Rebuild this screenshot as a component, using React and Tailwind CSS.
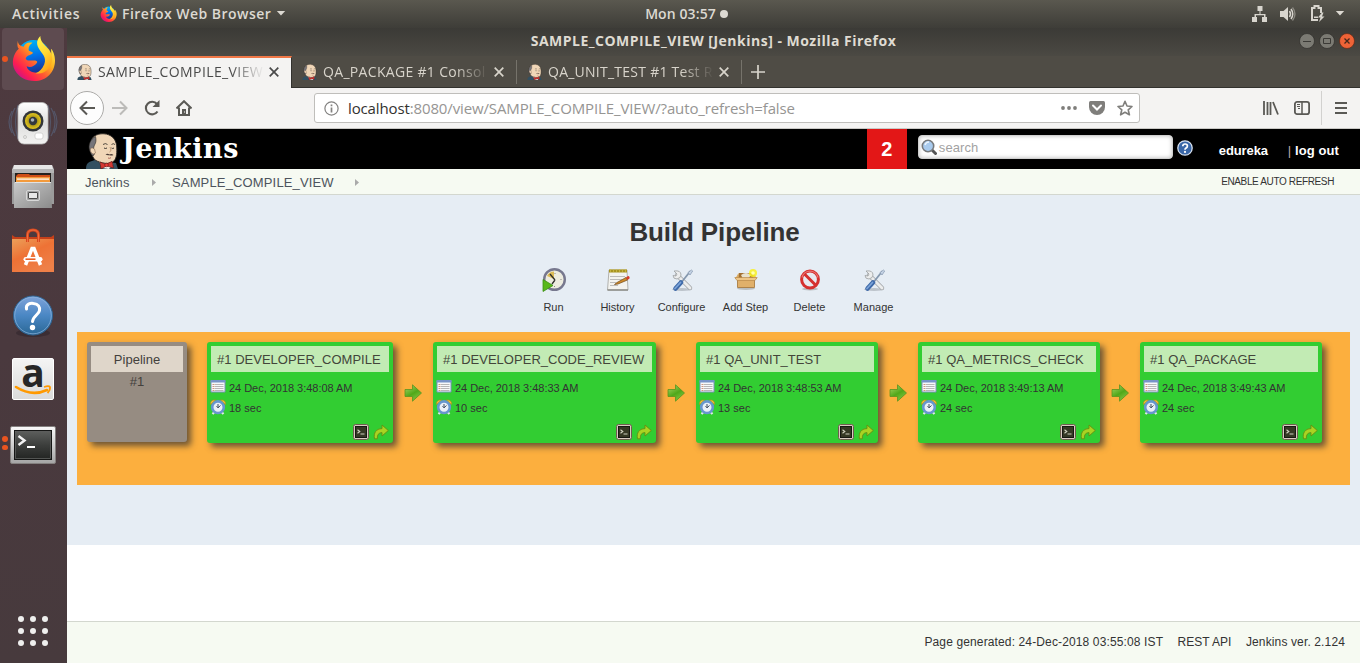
import React from "react";

const builds = [
  { name: "#1 DEVELOPER_COMPILE", time: "24 Dec, 2018 3:48:08 AM", took: "18 sec", width: "w-[186px]" },
  { name: "#1 DEVELOPER_CODE_REVIEW", time: "24 Dec, 2018 3:48:33 AM", took: "10 sec", width: "w-[223px]" },
  { name: "#1 QA_UNIT_TEST", time: "24 Dec, 2018 3:48:53 AM", took: "13 sec", width: "w-[182px]" },
  { name: "#1 QA_METRICS_CHECK", time: "24 Dec, 2018 3:49:13 AM", took: "24 sec", width: "w-[182px]" },
  { name: "#1 QA_PACKAGE", time: "24 Dec, 2018 3:49:43 AM", took: "24 sec", width: "w-[182px]" },
];

function FirefoxLogo({ className }) {
  return (
    <svg viewBox="0 0 44 46" className={className}>
      <defs>
        <linearGradient id="ffBody" x1="0.9" y1="0.1" x2="0.15" y2="0.85">
          <stop offset="0" stopColor="#fff24a" />
          <stop offset="0.35" stopColor="#ffb01e" />
          <stop offset="0.62" stopColor="#ff5634" />
          <stop offset="0.85" stopColor="#ff1f4f" />
          <stop offset="1" stopColor="#d8157c" />
        </linearGradient>
        <linearGradient id="ffGlobe" x1="0.4" y1="0" x2="0.6" y2="1">
          <stop offset="0" stopColor="#00b4f5" />
          <stop offset="0.5" stopColor="#0070e8" />
          <stop offset="1" stopColor="#1c2f8f" />
        </linearGradient>
        <linearGradient id="ffTail" x1="0.3" y1="0" x2="0.7" y2="1">
          <stop offset="0" stopColor="#fff44f" />
          <stop offset="0.5" stopColor="#ffd832" />
          <stop offset="1" stopColor="#ff9a14" />
        </linearGradient>
      </defs>
      <circle cx="22" cy="21" r="17" fill="url(#ffGlobe)" />
      <path d="M6 5c-1 4-.3 7 1 8C1 18-1 28 3 35c4 7 11 11 20 11 12 0 21-9 21-21 0-5-2-10-4-12 1 12-3 22-11 24-6 2-13-1-14-6 5 2 8-1 10-3 2-2 0-3-2-3-4 0-8 1-9-2 1-3 4-3 7-5 2-2-4-2-4-4 0-3 1-5 4-7-5-1-8 1-9 4C8 10 6 8 6 5z" fill="url(#ffBody)" />
      <path d="M29 0c-4 4-4 8-2 12 3 6 9 9 6 17-2 5-5 8-9 9 10 2 17-6 17-15 0-12-12-13-12-23z" fill="url(#ffTail)" />
    </svg>
  );
}

function Butler({ className }) {
  return (
    <svg viewBox="0 0 32 36" className={className}>
      <path d="M0 36c0-5 2-7 6-8l6-2 9 3 9 1 2 6z" fill="#335061" />
      <path d="M13 28l3 7 7 1 4-5-4-3z" fill="#f5f2ee" />
      <path d="M9 27C5 22 3 15 5 8 7 2 13 .5 18 .8c7 .4 12 5 12.600 12 .5 6 .3 12-2.500 15-1.500 2-5 3-9 2.500-4-.5-7-1.500-10-3.300z" fill="#f0d6b7" stroke="#2a2622" strokeWidth="0.900" />
      <path d="M9.500 3.500C4.500 6 2 12 3.500 17c1 3 2 5 3.500 6l1.500-2c-2-5-.5-8 .8-10.500 1-2 .7-5 .2-7z" fill="#77757a" stroke="#2a2622" strokeWidth="0.600" />
      <path d="M6.500 15c-3-1-3 5 1 6l2-1-1-4z" fill="#f0d6b7" stroke="#8a6a50" strokeWidth="0.600" />
      <path d="M17 11.500q2.500-1.800 4.500 0M25.500 11.500q1.800-1.600 3.500 0" fill="none" stroke="#2a2622" strokeWidth="0.800" />
      <path d="M18 15q1.500 1 3 0M25.500 15q1.200 1 2.500 0" fill="none" stroke="#2a2622" strokeWidth="0.900" />
      <path d="M24 14q2 4-.5 5" fill="none" stroke="#b08660" strokeWidth="0.800" />
      <path d="M19.500 21.300q2-1 4 .2 2-1.100 4 .4-1.800 1-4 .3-2.200.6-4-.9z" fill="#4a3a34" />
      <path d="M22 25q1.500.8 3-.3" stroke="#9a4a40" fill="none" strokeWidth="0.800" />
      <path d="M14 29l6 2.300 6-3 1.500 6.700-7-2-5.500 3z" fill="#d33833" stroke="#5a1412" strokeWidth="0.600" />
      <circle cx="20.500" cy="32" r="1.800" fill="#ef3d3a" stroke="#5a1412" strokeWidth="0.500" />
    </svg>
  );
}

function DockSpeaker() {
  return (
    <svg viewBox="0 0 50 50" className="h-[50px] w-[50px]">
      <defs>
        <linearGradient id="spk" x1="0" y1="0" x2="0" y2="1">
          <stop offset="0" stopColor="#ffffff" />
          <stop offset="0.5" stopColor="#dededd" />
          <stop offset="1" stopColor="#f3f3f2" />
        </linearGradient>
        <radialGradient id="cone">
          <stop offset="0" stopColor="#7a6a10" />
          <stop offset="1" stopColor="#e2c51f" />
        </radialGradient>
      </defs>
      <g fill="none" stroke="#5b7191" strokeWidth="1.200" opacity="0.500">
        <path d="M7 9q-8 14 0 28M4 12q-6 11 0 22M10 6q-5 17 0 34M43 9q8 14 0 28M46 12q6 11 0 22M40 6q5 17 0 34" />
      </g>
      <rect x="10" y="3.500" width="30" height="41.500" rx="6" fill="url(#spk)" stroke="#b9b9b7" strokeWidth="0.800" />
      <circle cx="25" cy="22" r="10.500" fill="#33363a" />
      <circle cx="25" cy="22" r="8" fill="url(#cone)" />
      <circle cx="25" cy="22" r="4.200" fill="#33373d" />
      <circle cx="24.500" cy="21" r="1.800" fill="#aab2ba" />
      <rect x="27" y="34" width="8" height="6" rx="2" fill="#fff" stroke="#c9c9c7" strokeWidth="0.700" />
      <rect x="15.500" y="36.500" width="3" height="3" rx="1.500" fill="none" stroke="#c9c9c7" />
    </svg>
  );
}

function DockFiles() {
  return (
    <svg viewBox="0 0 44 46" className="h-[46px] w-[44px]">
      <defs>
        <linearGradient id="cab" x1="0" y1="0" x2="1" y2="1">
          <stop offset="0" stopColor="#c9c9c9" />
          <stop offset="1" stopColor="#8b8b8b" />
        </linearGradient>
      </defs>
      <path d="M3 1h38l2 4v35H1V5z" fill="#9b9b9b" />
      <path d="M3 1h38l1 4H2z" fill="#e6e6e6" />
      <rect x="1" y="5" width="42" height="4" fill="#b5b5b5" />
      <rect x="4" y="9" width="36" height="10" fill="#25211e" />
      <path d="M5 12l2-2h11l1 1h20v8H5z" fill="#cf4f18" />
      <rect x="5" y="13" width="34" height="5" fill="#f39a3c" />
      <rect x="6" y="14.500" width="32" height="1.200" fill="#fff" />
      <path d="M4 18h36v1l1 25H3l-.2-25z" fill="url(#cab)" />
      <rect x="4" y="18" width="36" height="1" fill="#e2e2e2" />
      <rect x="15.500" y="26.500" width="13" height="10" rx="1.500" fill="#a4a4a4" stroke="#d8d8d8" />
      <rect x="17.500" y="28.500" width="9" height="6" rx="0.500" fill="#e9e9e9" stroke="#4c4c4c" />
    </svg>
  );
}

function DockSoftware() {
  return (
    <svg viewBox="0 0 44 46" className="-mt-[2px] h-[46px] w-[44px]">
      <defs>
        <linearGradient id="bag" x1="0" y1="0" x2="0.600" y2="1">
          <stop offset="0" stopColor="#eba05a" />
          <stop offset="0.500" stopColor="#ee7235" />
          <stop offset="1" stopColor="#ee8048" />
        </linearGradient>
      </defs>
      <path d="M1 7l3 2h36l3-2v6H1z" fill="#c4401a" />
      <rect x="1" y="11" width="42" height="33" fill="url(#bag)" />
      <path d="M16.500 14V7q0-5 5.500-5t5.500 5v7" fill="none" stroke="#d9481e" strokeWidth="3" />
      <path d="M16.500 14V7q0-5 5.500-5t5.500 5v7" fill="none" stroke="#f07040" strokeWidth="1" />
      <path d="M14.500 37l6.500-16.500h2l6.500 16.500" fill="none" stroke="#fff" strokeWidth="3.500" />
      <rect x="12.500" y="29" width="19" height="4.500" rx="2.200" fill="#fff" />
      <rect x="14.500" y="30.400" width="10" height="1.600" fill="#ea6028" />
    </svg>
  );
}

function DockHelp() {
  return (
    <svg viewBox="0 0 44 44" className="h-[44px] w-[44px]">
      <defs>
        <linearGradient id="hlp" x1="0" y1="0" x2="0" y2="1">
          <stop offset="0" stopColor="#7fa3da" />
          <stop offset="0.500" stopColor="#4a87c4" />
          <stop offset="1" stopColor="#2a6795" />
        </linearGradient>
      </defs>
      <ellipse cx="22" cy="39" rx="17" ry="4" fill="#2c2227" opacity="0.500" />
      <circle cx="22" cy="21.500" r="19.500" fill="url(#hlp)" stroke="#2e6391" />
      <circle cx="22" cy="21.500" r="18.300" fill="none" stroke="#8db5dd" opacity="0.700" />
      <path d="M15.500 15c-1-5 4-6 7-5.500 5 .5 6.500 3.500 6 7-.5 4-6.500 5.500-7 11" fill="none" stroke="#fff" strokeWidth="3" strokeLinecap="round" />
      <circle cx="21.500" cy="33.500" r="2.700" fill="#fff" />
    </svg>
  );
}

function DockAmazon() {
  return (
    <div className="relative flex h-[42px] w-[42px] justify-center rounded-[2px] border border-white bg-linear-to-b from-[#f4f4f4] to-[#dadada]">
      <span className="-mt-[10px] font-['Open_Sans',sans-serif] text-[39px] leading-[45px] font-bold text-[#262626]">a</span>
      <svg viewBox="0 0 42 12" className="absolute -left-px top-[25px] h-3 w-[42px]">
        <path d="M4 3q16 10 31 3" fill="none" stroke="#ff9900" strokeWidth="2.600" strokeLinecap="round" />
        <path d="M32 3q5-1.500 6 0 .5 3-2.500 6" fill="none" stroke="#ff9900" strokeWidth="1.800" />
      </svg>
    </div>
  );
}

function DockTerminal() {
  return (
    <svg viewBox="0 0 46 38" className="h-[38px] w-[46px]">
      <defs>
        <linearGradient id="trm" x1="0" y1="0" x2="0" y2="1">
          <stop offset="0" stopColor="#5c5e5c" />
          <stop offset="0.500" stopColor="#3c3e3c" />
          <stop offset="1" stopColor="#242624" />
        </linearGradient>
        <linearGradient id="frm" x1="0" y1="0" x2="0" y2="1">
          <stop offset="0" stopColor="#fafafa" />
          <stop offset="1" stopColor="#a4a4a4" />
        </linearGradient>
      </defs>
      <rect x="0.500" y="0.500" width="45" height="37" rx="1.500" fill="url(#frm)" stroke="#84807f" />
      <rect x="4" y="4" width="38" height="30" fill="#151615" />
      <rect x="5.500" y="5.500" width="35" height="27" fill="url(#trm)" stroke="#6b6d6b" strokeWidth="0.700" />
      <path d="M8.500 10l6 4.500-6 4.500" fill="none" stroke="#f2f2f2" strokeWidth="2.400" />
      <path d="M17 21h8" stroke="#fff" strokeWidth="2" />
    </svg>
  );
}

function DockItem({ children, dots = 0, active }) {
  return (
    <div className="relative flex h-16 w-full items-center justify-center pr-px">
      {active && <div className="absolute top-0 left-[2px] h-[62px] w-[62px] rounded-[4px] bg-[#5e4b50]" />}
      {dots > 0 && (
        <div className="absolute top-[2px] left-[2px] flex h-[58px] flex-col justify-center gap-[3px]">
          {Array.from({ length: dots }, (_, i) => (
            <span key={i} className="h-[5.500px] w-[5.500px] rounded-full bg-[#e95420]" />
          ))}
        </div>
      )}
      <div className="relative">{children}</div>
    </div>
  );
}

function Dock() {
  return (
    <aside className="flex w-[67px] shrink-0 flex-col bg-linear-to-b from-[#4e3a3f] via-[#4a393e] to-[#473a3d]">
      <DockItem active dots={1}><FirefoxLogo className="-mt-[3px] h-[45px] w-[45px]" /></DockItem>
      <DockItem><DockSpeaker /></DockItem>
      <DockItem><div className="-mt-[2px]"><DockFiles /></div></DockItem>
      <DockItem><DockSoftware /></DockItem>
      <DockItem><DockHelp /></DockItem>
      <DockItem><div className="-mt-[2px]"><DockAmazon /></div></DockItem>
      <div className="relative flex h-16 w-full items-center justify-center pr-px">
        <div className="absolute top-[24px] left-[2px] flex flex-col gap-[3px]">
          <span className="h-[5.500px] w-[5.500px] rounded-full bg-[#e95420]" />
          <span className="h-[5.500px] w-[5.500px] rounded-full bg-[#e95420]" />
        </div>
        <div className="mt-[2px]"><DockTerminal /></div>
      </div>
      <div className="mt-auto mr-px mb-[17px] grid grid-cols-3 gap-[6px] self-center">
        {Array.from({ length: 9 }, (_, i) => (
          <span key={i} className="h-[6px] w-[6px] rounded-full bg-[#efefee]" />
        ))}
      </div>
    </aside>
  );
}

function TopBar() {
  return (
    <header className="grid h-7 grid-cols-[1fr_auto_1fr] items-center bg-linear-to-b from-[#5a584f] to-[#3e3d38] pb-px font-['Open_Sans',sans-serif] text-[14px] leading-5 font-semibold text-[#dcd9d2]">
      <div className="flex items-center pl-3">
        <span className="w-[88px] tracking-[0.680px]">Activities</span>
        <FirefoxLogo className="h-[17px] w-[17px]" />
        <span className="ml-[5px] tracking-[0.480px]">Firefox Web Browser</span>
        <svg viewBox="0 0 10 6" className="ml-[5px] h-[5px] w-[10px]"><path d="M0 0h10L5 5.500z" fill="#dcd9d2" /></svg>
      </div>
      <div className="flex items-center gap-1 pl-[13px]">
        <span className="tracking-[0.100px]">Mon 03:57</span>
        <span className="h-[8px] w-[8px] rounded-full bg-[#dcd9d2]" />
      </div>
      <div className="flex items-center justify-end pr-[15px]">
        <svg viewBox="0 0 16 16" className="h-4 w-4" fill="#d8d5ce">
          <path d="M5.500 0h5v5H8.500v3h5v3H15v5h-5v-5h2V9.200H4V11h1v5H0v-5h2.500V8h5V5h-2z" />
        </svg>
        <svg viewBox="0 0 16 16" className="ml-[12px] h-4 w-4">
          <path d="M0 5h3.500L8 1v14l-4.500-4H0z" fill="#d8d5ce" />
          <path d="M9.500 5q2 3 0 6M11 3q3.500 5 0 10" fill="none" stroke="#d8d5ce" strokeWidth="1.500" />
          <path d="M12.500 1.500q5 6.500 0 13" fill="none" stroke="#8b8981" strokeWidth="1.300" />
        </svg>
        <svg viewBox="0 0 15 17" className="ml-[14px] h-[17px] w-[15px]">
          <path d="M8 15H2V3h2.500V1h4v2H11v5" fill="none" stroke="#d8d5ce" strokeWidth="2" />
          <path d="M4 11.500h4v1.500H4z" fill="#d8d5ce" />
          <path d="M12 7.500l-4 5h2.500L9 17l5.500-5.500h-2.500l1.500-4z" fill="#d8d5ce" />
        </svg>
        <svg viewBox="0 0 10 6" className="ml-[10px] h-[5px] w-[10px]"><path d="M0 0h10L5 5.500z" fill="#dcd9d2" /></svg>
      </div>
    </header>
  );
}

function TitleBar() {
  return (
    <div className="grid h-7 grid-cols-[1fr_auto_1fr] items-center bg-linear-to-b from-[#3b3a36] to-[#4b4943] pb-[3px] font-['Open_Sans',sans-serif] text-[14px] leading-5 font-bold text-[#dfdbd2]">
      <span />
      <span className="tracking-[0.490px]">SAMPLE_COMPILE_VIEW [Jenkins] - Mozilla Firefox</span>
      <div className="flex justify-end gap-1 pr-[5px]">
        <svg viewBox="0 0 16 16" className="h-4 w-4"><circle cx="8" cy="8" r="7.500" fill="#7b7a73" stroke="#2f2e2b" strokeWidth="0.700" /><path d="M4 8.500h8" stroke="#3b3a36" /></svg>
        <svg viewBox="0 0 16 16" className="h-4 w-4"><circle cx="8" cy="8" r="7.500" fill="#7b7a73" stroke="#2f2e2b" strokeWidth="0.700" /><path d="M4.500 5.500h7v5h-7z" fill="none" stroke="#3b3a36" /></svg>
        <svg viewBox="0 0 16 16" className="h-4 w-4"><circle cx="8" cy="8" r="7.500" fill="#ee6337" stroke="#5e2a18" strokeWidth="0.700" /><path d="M5.500 5.500l5 5m0-5l-5 5" stroke="#46281c" strokeWidth="1.300" /></svg>
      </div>
    </div>
  );
}

function CloseX() {
  return (
    <svg viewBox="0 0 10 10" className="h-[10px] w-[10px] shrink-0"><path d="M.7.7l8.600 8.600m0-8.600L.7 9.300" stroke="currentColor" strokeWidth="1.700" /></svg>
  );
}

function TabLabel({ children }) {
  return (
    <span className="ml-[6px] w-[166px] font-['Open_Sans',sans-serif] text-[14px] leading-6 whitespace-nowrap [mask-image:linear-gradient(to_right,black_80%,transparent_100%)]">
      {children}
    </span>
  );
}

function Tabs() {
  return (
    <div className="flex h-8 bg-[#4f4c45]">
      <div className="flex w-[225px] items-center border-t-2 border-r border-t-[#f07746] border-r-[#33322e] bg-[#f4f3f2] pb-[2px] pl-[10px] text-[#4a4a4a]">
        <Butler className="h-4 w-[15px] shrink-0" />
        <TabLabel><span className="tracking-[0.400px]">SAMPLE_COMPILE_VIEW</span></TabLabel>
        <span className="ml-[5px] flex"><CloseX /></span>
      </div>
      <div className="flex grow items-center border-b border-[#33322e] text-[#d8d4cb]">
        <div className="flex h-6 w-[225px] items-center border-r border-[#76736b] pl-[10px]">
          <Butler className="h-4 w-[15px] shrink-0" />
          <TabLabel><span className="tracking-[0.320px]">QA_PACKAGE #1 Consol</span></TabLabel>
          <span className="ml-[5px] flex"><CloseX /></span>
        </div>
        <div className="flex h-6 w-[225px] items-center border-r border-[#76736b] pl-[10px]">
          <Butler className="h-4 w-[15px] shrink-0" />
          <TabLabel><span className="tracking-[0.250px]">QA_UNIT_TEST #1 Test R</span></TabLabel>
          <span className="ml-[5px] flex"><CloseX /></span>
        </div>
        <svg viewBox="0 0 14 14" className="ml-[9px] h-[14px] w-[14px]"><path d="M7 0v14M0 7h14" stroke="currentColor" strokeWidth="1.700" /></svg>
      </div>
    </div>
  );
}

function Toolbar() {
  return (
    <div className="flex h-[41px] items-center border-b border-[#c9c8c5] bg-[#f4f3f2] pl-[3px] text-[#5a5955]">
      <div className="flex h-[34px] w-[34px] items-center justify-center rounded-full border border-[#acaba9] bg-[#fdfdfd]">
        <svg viewBox="0 0 16 16" className="h-4 w-4"><path d="M16 8H1.500M8 1.500L1.500 8 8 14.500" fill="none" stroke="currentColor" strokeWidth="2" /></svg>
      </div>
      <svg viewBox="0 0 16 16" className="ml-2 h-4 w-4 text-[#bcbbb9]"><path d="M0 8h14.500M8 1.500L14.500 8 8 14.500" fill="none" stroke="currentColor" strokeWidth="2" /></svg>
      <svg viewBox="0 0 16 16" className="ml-4 h-4 w-4"><path d="M13.500 11.500A6.300 6.300 0 1 1 13 4" fill="none" stroke="currentColor" strokeWidth="2.100" /><path d="M15.500 0v7H8.500z" fill="currentColor" /></svg>
      <svg viewBox="0 0 16 16" className="ml-4 h-4 w-4"><path d="M.5 8.500L8 1.200l7.500 7.300M3 7.500V15h10V7.500" fill="none" stroke="currentColor" strokeWidth="2" /><path d="M6 9h4v6H6z" fill="currentColor" /><path d="M8.500 11.500v1" stroke="#fff" /></svg>
      <div className="ml-[122px] flex h-[30px] w-[826px] items-center rounded-[3px] border border-[#bfbebb] bg-white pl-[9px]">
        <svg viewBox="0 0 15 15" className="h-[15px] w-[15px]"><circle cx="7.500" cy="7.500" r="6.600" fill="none" stroke="#838280" strokeWidth="1.200" /><path d="M7.500 6.500v5M7.500 3.500v1.800" stroke="#838280" strokeWidth="1.700" /></svg>
        <span className="ml-[9px] font-['Open_Sans',sans-serif] text-[15px] tracking-[-0.130px] whitespace-nowrap text-[#969593]"><span className="text-[#33322f]">localhost</span>:8080/view/SAMPLE_COMPILE_VIEW/?auto_refresh=false</span>
        <div className="ml-auto flex items-center pr-[6px] text-[#7f7e7b]">
          <svg viewBox="0 0 16 4" className="h-1 w-4" fill="currentColor"><circle cx="2" cy="2" r="1.900" /><circle cx="8" cy="2" r="1.900" /><circle cx="14" cy="2" r="1.900" /></svg>
          <svg viewBox="0 0 16 14" className="ml-3 h-[14px] w-4"><path d="M1.500 0h13Q16 0 16 1.500V6a8 8 0 0 1-16 0V1.500Q0 0 1.500 0z" fill="currentColor" /><path d="M4 4.500l4 4 4-4" fill="none" stroke="#fff" strokeWidth="2" strokeLinecap="round" /></svg>
          <svg viewBox="0 0 16 16" className="ml-3 h-4 w-4"><path d="M8 1.300l2 4.700 5 .5-3.800 3.300 1.200 5L8 12.200l-4.400 2.600 1.200-5L1 6.500 6 6z" fill="none" stroke="currentColor" strokeWidth="1.600" strokeLinejoin="round" /></svg>
        </div>
      </div>
      <svg viewBox="0 0 16 14" className="ml-[123px] h-[14px] w-4"><path d="M1 0v14M4.500 1v13M7.500 1v13M10 1l5 12.500" stroke="currentColor" strokeWidth="1.800" /></svg>
      <svg viewBox="0 0 16 14" className="ml-[15px] h-[14px] w-4"><rect x="0.900" y="0.900" width="14.200" height="12.200" rx="2.200" fill="none" stroke="currentColor" strokeWidth="1.800" /><path d="M8 1v12" stroke="currentColor" strokeWidth="1.500" /><path d="M3 3.500h3M3 5.500h3M4 7.500h2" stroke="currentColor" /></svg>
      <div className="ml-[11px] h-[34px] w-px bg-[#d2d1cf]" />
      <svg viewBox="0 0 12 12" className="ml-[13px] h-3 w-3"><path d="M0 1h12M0 6h12M0 11h12" stroke="currentColor" strokeWidth="2" /></svg>
    </div>
  );
}

function JenkinsHeader() {
  return (
    <div className="flex h-10 items-start overflow-hidden bg-black text-white">
      <Butler className="mt-1 ml-[19px] h-9 w-[32px]" />
      <span className="ml-1 font-['DejaVu_Serif',serif] text-[27px] leading-10 font-bold tracking-[0.500px]">Jenkins</span>
      <div className="ml-auto flex h-10 w-10 items-center justify-center bg-[#e31717] text-[20px] font-bold">2</div>
      <div className="mt-[6px] ml-[11px] flex h-6 w-[255px] items-center rounded-[4px] border border-[#cfcfcf] bg-white pl-[2px] shadow-[inset_0_0_4px_#bbb]">
        <svg viewBox="0 0 16 16" className="h-4 w-4"><path d="M10.500 10.500l4 4" stroke="#555" strokeWidth="3" strokeLinecap="round" /><circle cx="7" cy="7" r="5.700" fill="#a9cbee" stroke="#77797b" strokeWidth="1.600" /><path d="M4 6q1-3 4-3" fill="none" stroke="#eaf4fd" strokeWidth="1.500" /></svg>
        <span className="ml-[2px] pt-[2px] text-[13px] leading-4 tracking-[0.100px] text-[#a2a2a2]">search</span>
      </div>
      <svg viewBox="0 0 16 16" className="mt-[11px] ml-1 h-4 w-4"><circle cx="8" cy="8" r="7.200" fill="#3a67a8" stroke="#d5e0ef" strokeWidth="1.300" /><path d="M5.800 6.300q0-2.300 2.300-2.300t2.300 2q0 1.500-1.400 2.100Q8 8.700 8 9.700" fill="none" stroke="#fff" strokeWidth="1.700" /><circle cx="8" cy="11.900" r="1.100" fill="#fff" /></svg>
      <span className="mt-[12px] ml-[26px] w-[49px] text-[13px] leading-5 font-bold tracking-[-0.100px]">edureka</span>
      <span className="mt-[12px] mr-[21px] ml-5 text-[13px] leading-5 font-bold tracking-[0.100px] whitespace-pre"><span className="font-normal text-[#bda9a9]">|</span> log out</span>
    </div>
  );
}

function Crumb() {
  return <svg viewBox="0 0 4 7" className="h-[7px] w-1"><path d="M0 0l4 3.500L0 7z" fill="#aaa" /></svg>;
}

function Breadcrumbs() {
  return (
    <div className="flex h-[26px] items-center border-b border-[#d3d7cf] bg-[#f6faf2] pt-px pl-[18px] text-[13px] text-[#4d545d]">
      <span className="w-[67px] pt-px tracking-[0.050px]">Jenkins</span>
      <Crumb />
      <span className="ml-4 w-[183px] pt-px tracking-[0.150px]">SAMPLE_COMPILE_VIEW</span>
      <Crumb />
      <span className="mr-[26px] ml-auto pb-px text-[10px] tracking-[-0.370px] text-[#333]">ENABLE AUTO REFRESH</span>
    </div>
  );
}

function RunIcon() {
  return (
    <svg viewBox="0 0 24 24" className="h-6 w-6">
      <circle cx="12.500" cy="11.500" r="10.300" fill="#edecdf" stroke="#77788e" strokeWidth="2.400" />
      <path d="M12 11V3.500A8 8 0 0 0 5 8z" fill="#dcbb55" />
      <path d="M8 6l5 6m0 0l-3 4" stroke="#30302c" strokeWidth="1.300" />
      <path d="M13 5v1M18.500 11.500h1M12.500 18v1" stroke="#888" />
      <path d="M1 11.500L11 17.500 1 23.500z" fill="#58b818" stroke="#3c8f15" strokeWidth="0.800" />
    </svg>
  );
}

function HistoryIcon() {
  return (
    <svg viewBox="0 0 24 24" className="h-6 w-6">
      <path d="M3 2h18l1 20H1.500z" fill="#f3f3ef" stroke="#aaaaa6" strokeWidth="0.900" />
      <path d="M3 1.500h18v3H3z" fill="#a8941f" />
      <path d="M4.500 1v3m3-3v3m3-3v3m3-3v3m3-3v3m3-3v3" stroke="#cdbb4a" strokeWidth="0.800" />
      <path d="M4 8.500h15M4 11.500h12M4 14.500h6M4 17.500h8" stroke="#bcbcba" />
      <path d="M1.500 22h20.500" stroke="#898985" strokeWidth="1.400" />
      <path d="M11 14.500l9-5 1.500 2.500-9.500 4-3.500.5z" fill="#cf8a28" stroke="#704818" strokeWidth="0.700" />
      <path d="M20 9.500l2-1.500q2 0 1.500 2.500l-2 1.500z" fill="#d83a28" />
    </svg>
  );
}

function ToolsIcon() {
  return (
    <svg viewBox="0 0 24 24" className="h-6 w-6">
      <ellipse cx="12" cy="21.500" rx="10" ry="1.500" fill="#bcc3ca" />
      <path d="M7 7l13 13" stroke="#9c9fa1" strokeWidth="4.400" strokeLinecap="round" />
      <path d="M7 7l13 13" stroke="#eceded" strokeWidth="3" strokeLinecap="round" />
      <path d="M4 3l3 3-1 2-3-.5Q3 11 7 11q4-1 4-4 0-5-7-4z" fill="#eceded" stroke="#9c9fa1" strokeWidth="0.800" />
      <path d="M20.500 3l-8 10" stroke="#8497ad" strokeWidth="1.800" />
      <path d="M18 4.500L21.500 2l1.200 1-2.700 4z" fill="#c6d4e6" stroke="#8497ad" strokeWidth="0.700" />
      <path d="M11 14.500L5.500 20.500" stroke="#3f6aa8" strokeWidth="4.600" strokeLinecap="round" />
      <path d="M10.500 14.500l-5.500 6" stroke="#7ba3d8" strokeWidth="1.800" strokeLinecap="round" />
    </svg>
  );
}

function BoxIcon() {
  return (
    <svg viewBox="0 0 24 24" className="h-6 w-6">
      <ellipse cx="12" cy="20.500" rx="9" ry="1.500" fill="#b9bec1" />
      <path d="M5 5h14l2 6H3z" fill="#a26f31" />
      <path d="M7 7q5-4 10 0l-3 4H9z" fill="#e8e1cd" />
      <path d="M4.500 5L1 11h4zM19.500 5L23 11h-4z" fill="#dcac62" />
      <path d="M3.500 11h17v8.500h-17z" fill="#e0b06a" stroke="#a37436" strokeWidth="0.800" />
      <path d="M.8 9.500h22.400L21 12.500H3z" fill="#edc586" stroke="#b08040" strokeWidth="0.600" />
      <circle cx="19" cy="5" r="4" fill="#f8f020" opacity="0.850" />
      <circle cx="19" cy="5" r="1.800" fill="#ffffb0" />
    </svg>
  );
}

function DeleteIcon() {
  return (
    <svg viewBox="0 0 24 24" className="h-6 w-6">
      <ellipse cx="12" cy="21" rx="8" ry="1.500" fill="#b9bec1" />
      <circle cx="12" cy="11.500" r="8.400" fill="#e7eaf0" stroke="#d5302e" strokeWidth="3" />
      <path d="M6.500 6l11 11" stroke="#d5302e" strokeWidth="3" />
      <path d="M4 9.500a8.200 8.200 0 0 1 16 0" fill="none" stroke="#ea7674" strokeWidth="1.200" />
    </svg>
  );
}

const actions = [
  { label: "Run", Icon: RunIcon },
  { label: "History", Icon: HistoryIcon },
  { label: "Configure", Icon: ToolsIcon },
  { label: "Add Step", Icon: BoxIcon },
  { label: "Delete", Icon: DeleteIcon },
  { label: "Manage", Icon: ToolsIcon },
];

function CalendarIcon() {
  return (
    <svg viewBox="0 0 16 16" className="h-4 w-4"><path d="M1 2h14v11H1z" fill="#f8f9fa" stroke="#7a90ba" /><path d="M.5 1h15v2.500H.5z" fill="#7794c8" /><path d="M2.500 5.500h2M2.500 7.500h2M2.500 9.500h2M2.500 11.500h2" stroke="#c98a72" strokeWidth="0.900" /><path d="M5 5.500h8.500M5 7.500h8.500M5 9.500h8.500M5 11.500h8.500" stroke="#a4a4a6" strokeWidth="0.800" /></svg>
  );
}

function AlarmIcon() {
  return (
    <svg viewBox="0 0 16 16" className="h-4 w-4"><path d="M.6 5.500Q0 .6 5.500 1zM15.400 5.500Q16 .6 10.500 1z" fill="#f3c13a" stroke="#c4851c" strokeWidth="0.600" /><path d="M2.500 15l2.500-2.500M13.500 15L11 12.500" stroke="#e1e6ee" strokeWidth="2.200" /><circle cx="8" cy="8.200" r="5.800" fill="#e9f0f7" stroke="#6796ce" strokeWidth="2.600" /><path d="M8 5V8.800l2.500-2.300M8 8.800L6.500 7.300" fill="none" stroke="#3d4c5f" strokeWidth="1" /></svg>
  );
}

function ConsoleIcon() {
  return (
    <svg viewBox="0 0 16 16" className="h-4 w-4"><rect x="0.500" y="0.500" width="15" height="15" rx="2" fill="#d8ccc0" stroke="#6f5c50" /><rect x="2.500" y="2.500" width="11" height="11" fill="#353824" stroke="#171812" /><path d="M4.500 5.800L6.800 7.500 4.500 9.200M7.500 10h4" fill="none" stroke="#cfd0bf" strokeWidth="1.100" /></svg>
  );
}

function RerunIcon() {
  return (
    <svg viewBox="0 0 16 16" className="h-4 w-4"><path d="M1.500 14.800C.3 9 3 4.800 9 4.600V1l6.300 5.500L9 12V8.600Q4 8.700 4.300 14.800z" fill="#a9d322" stroke="#648e13" strokeWidth="0.900" /></svg>
  );
}

function NextArrow() {
  return (
    <svg viewBox="0 0 18 18" className="mx-[11px] mt-[42px] h-[18px] w-[18px] shrink-0">
      <defs><linearGradient id="nxt" x1="0" y1="0" x2="0.600" y2="1"><stop offset="0" stopColor="#b0d86a" /><stop offset="0.600" stopColor="#50a81a" /><stop offset="1" stopColor="#81c43f" /></linearGradient></defs>
      <path d="M1 5.500h7.500V.8l9 8.200-9 8.200v-4.700H1z" fill="url(#nxt)" stroke="#5b931f" strokeWidth="0.800" />
    </svg>
  );
}

function BuildCard({ build }) {
  return (
    <div className={`flex h-[101px] shrink-0 flex-col rounded-[3px] bg-[#32cd32] px-1 pt-1 pb-[3px] text-[#333] shadow-[4px_4px_6px_rgba(60,55,50,0.75)] ${build.width}`}>
      <div className="h-[26px] bg-[#c2ebb4] pl-[6px] text-[13px] leading-[27px] tracking-[0.020px] whitespace-nowrap text-[#43453a]">{build.name}</div>
      <div className="mt-[7px] -ml-px flex h-4 items-center gap-[3px] text-[11px]">
        <CalendarIcon />
        <span className="pt-[2px] tracking-[-0.030px] whitespace-nowrap">{build.time}</span>
      </div>
      <div className="mt-1 -ml-px flex h-4 items-center gap-[3px] text-[11px]">
        <AlarmIcon />
        <span className="pt-[2px]">{build.took}</span>
      </div>
      <div className="mt-auto flex justify-end gap-1"><ConsoleIcon /><RerunIcon /></div>
    </div>
  );
}

function Pipeline() {
  return (
    <main className="flex h-[350px] flex-col bg-[#e6edf4]">
      <h1 className="mt-[22px] pl-[2px] text-center text-[26px] leading-[30px] font-bold tracking-[-0.120px] text-[#333]">Build Pipeline</h1>
      <nav className="mt-[21px] ml-[454.500px] flex">
        {actions.map(({ label, Icon }) => (
          <div key={label} className="flex w-16 flex-col items-center">
            <Icon />
            <span className="mt-[7px] text-[11px] leading-4 whitespace-nowrap text-[#333]">{label}</span>
          </div>
        ))}
      </nav>
      <section className="mt-[17px] mr-[10px] ml-[10px] flex h-[153px] bg-[#fcaf3e] pt-[10px] pl-[10px]">
        <div className="mr-5 h-[100px] w-[100px] shrink-0 rounded-[3px] bg-[#968c82] p-1 text-center text-[13px] text-[#43403c] shadow-[4px_4px_6px_rgba(60,55,50,0.75)]">
          <div className="h-[26px] bg-[#dfd6ca] leading-[27px]">Pipeline</div>
          <div className="leading-[19px]">#1</div>
        </div>
        {builds.map((b, i) => (
          <React.Fragment key={b.name}>
            {i > 0 && <NextArrow />}
            <BuildCard build={b} />
          </React.Fragment>
        ))}
      </section>
    </main>
  );
}

export default function App() {
  return (
    <div className="flex h-[663px] w-[1360px] flex-col overflow-hidden">
      <TopBar />
      <div className="flex min-h-0 grow">
        <Dock />
        <div className="flex grow flex-col bg-white font-['Liberation_Sans',Arial,sans-serif]">
          <TitleBar />
          <Tabs />
          <Toolbar />
          <JenkinsHeader />
          <Breadcrumbs />
          <Pipeline />
          <footer className="mt-auto flex h-[42px] items-center justify-end gap-[14.500px] border-t border-[#d3d7cf] bg-[#f6faf2] pr-[15px] pb-[2px] text-[12px] text-[#333]">
            <span className="tracking-[0.130px]">Page generated: 24-Dec-2018 03:55:08 IST</span>
            <span>REST API</span>
            <span className="tracking-[0.130px]">Jenkins ver. 2.124</span>
          </footer>
        </div>
      </div>
    </div>
  );
}
